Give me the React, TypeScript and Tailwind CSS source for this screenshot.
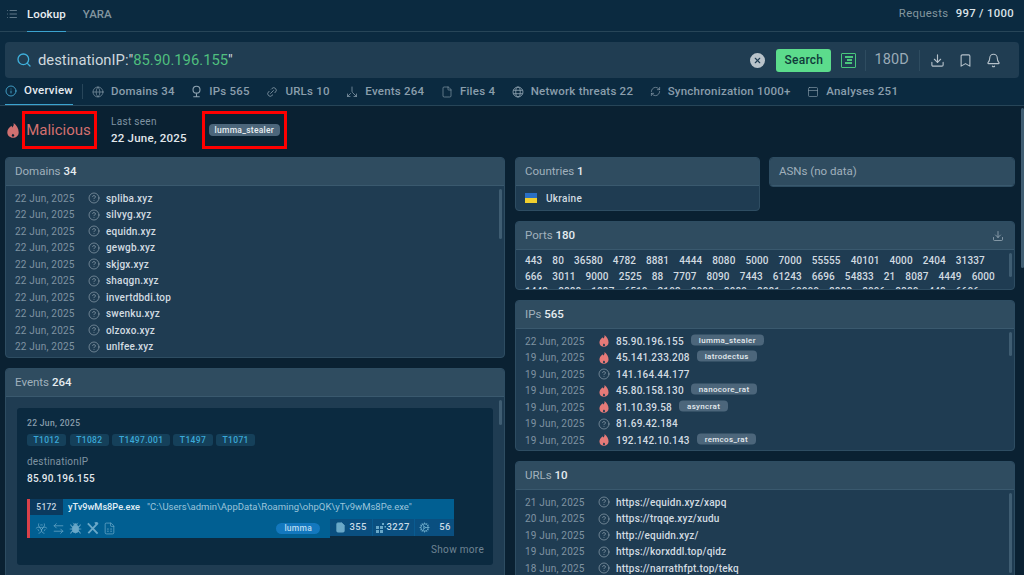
import React from "react";
import { List, Search, Info, Globe, Link2, File, RefreshCw, PanelTop, Download, Bookmark, Bell, CircleHelp, X, Split, Biohazard, ArrowLeftRight, Bug, FileSpreadsheet, Cog } from "lucide-react";

const Flame = ({ c = "w-[11px] h-[14px]" }: { c?: string }) => (
  <svg viewBox="0 0 12 15" className={c} fill="#e67a78">
    <path fillRule="evenodd" d="M6.600 0c.5 2.200-.4 3.400-1.300 4.400-.4-.5-.6-1-.6-1.700C2.200 4.300.3 6.500.3 9.300c0 3.200 2.500 5.500 5.700 5.500s5.700-2.300 5.700-5.400C11.700 5.500 9.500 2 6.600 0zM6 13.800c-.8 0-1.300-.5-1.300-1.200 0-.7.6-1.200 1.200-1.900.8.6 1.400 1.200 1.400 1.900 0 .7-.5 1.200-1.300 1.200z" />
  </svg>
);

const IpIcon = () => (
  <svg viewBox="0 0 12 14" className="h-[13px] w-[11px]" fill="none" stroke="#8fa3b1" strokeWidth="1.200">
    <circle cx="6" cy="5" r="3.800" />
    <path d="M6 8.800V12.500M2.500 12.800h7" />
  </svg>
);

const NetIcon = () => (
  <svg viewBox="0 0 14 14" className="h-[12px] w-[12px]" fill="none" stroke="#8fa3b1" strokeWidth="1">
    <circle cx="7" cy="7" r="5.800" />
    <ellipse cx="7" cy="7" rx="2.600" ry="5.800" />
    <path d="M1.500 5h11M1.500 9h11" />
  </svg>
);

const ToolsIcon = () => (
  <svg viewBox="0 0 14 14" className="h-[13px] w-[13px]" fill="none" stroke="#6aa8c8" strokeWidth="2">
    <path d="M2 1.500l10.500 11M12.500 1.500L2.500 12M9.500 1.500c1-.6 2.500-.4 3.300.5" />
  </svg>
);

const Card = ({ title, count, right, children, className = "" }: { title: string; count?: string; right?: React.ReactNode; children?: React.ReactNode; className?: string }) => (
  <section className={`relative flex flex-col overflow-hidden rounded-[4px] border border-[#2e4d62] bg-[#1f3c52] ${className}`}>
    <header className="flex h-[28px] shrink-0 items-center justify-between border-b border-[#3a596e] bg-[#2f4c60] pl-[9px] pr-[10px] text-[11.500px] text-[#a0b0bc]">
      <span>
        {title}
        {count && <span className="font-medium text-[#e6ecf0]"> {count}</span>}
      </span>
      {right}
    </header>
    {children}
  </section>
);

const Thumb = ({ top, h, right = "right-[2px]" }: { top: string; h: string; right?: string }) => (
  <span className={`absolute ${right} ${top} ${h} w-[3px] rounded-full bg-[#3f5d72]`} />
);

const Row = ({ date, mal, text, tag }: { date: string; mal?: boolean; text: string; tag?: string }) => (
  <div className="flex h-[16.500px] items-center pl-[9px]">
    <span className="w-[73px] shrink-0 text-[10px] tracking-[0.02em] text-[#7f93a2]">{date}</span>
    <span className="flex w-[18px] shrink-0 justify-start">
      {mal ? <Flame c="ml-[1px] w-[10px] h-[12px]" /> : <CircleHelp className="h-[12px] w-[12px] text-[#9fb0bc]" strokeWidth={1.200} />}
    </span>
    <span className="text-[10px] font-medium tracking-[0.02em] text-[#d2dbe1]">{text}</span>
    {tag && <span className="ml-[7px] -translate-y-[1.500px] rounded-[4px] bg-[#4c667b] px-[8px] text-[8px] leading-[11px] font-medium tracking-[0.04em] text-[#e4eaee]">{tag}</span>}
  </div>
);

const ports = [
  ["443", "80", "36580", "4782", "8881", "4444", "8080", "5000", "7000", "55555", "40101", "4000", "2404", "31337"],
  ["666", "3011", "9000", "2525", "88", "7707", "8090", "7443", "61243", "6696", "54833", "21", "8087", "4449", "6000"],
  ["1443", "8888", "1887", "6510", "2103", "8008", "8989", "8081", "60000", "8883", "8096", "8880", "448", "6606"],
];

const domains = ["spliba.xyz", "silvyg.xyz", "equidn.xyz", "gewgb.xyz", "skjgx.xyz", "shaqgn.xyz", "invertdbdi.top", "swenku.xyz", "olzoxo.xyz", "unlfee.xyz"];
const ips: [string, boolean, string, string?][] = [
  ["22 Jun, 2025", true, "85.90.196.155", "lumma_stealer"],
  ["19 Jun, 2025", true, "45.141.233.208", "latrodectus"],
  ["19 Jun, 2025", false, "141.164.44.177"],
  ["19 Jun, 2025", true, "45.80.158.130", "nanocore_rat"],
  ["19 Jun, 2025", true, "81.10.39.58", "asyncrat"],
  ["19 Jun, 2025", false, "81.69.42.184"],
  ["19 Jun, 2025", true, "192.142.10.143", "remcos_rat"],
];
const urls = [
  ["21 Jun, 2025", "https://equidn.xyz/xapq"],
  ["20 Jun, 2025", "https://trqqe.xyz/xudu"],
  ["19 Jun, 2025", "http://equidn.xyz/"],
  ["19 Jun, 2025", "https://korxddl.top/qidz"],
  ["18 Jun, 2025", "https://narrathfpt.top/tekq"],
];
const tabs: [React.ReactNode, string][] = [
  [<Globe className="h-[12px] w-[12px]" strokeWidth={1.300} />, "Domains 34"],
  [<IpIcon />, "IPs 565"],
  [<Link2 className="h-[12px] w-[12px] -rotate-45" strokeWidth={1.500} />, "URLs 10"],
  [<Split className="h-[12px] w-[12px] rotate-180" strokeWidth={1.500} />, "Events 264"],
  [<File className="h-[12px] w-[12px]" strokeWidth={1.300} />, "Files 4"],
  [<NetIcon />, "Network threats 22"],
  [<RefreshCw className="h-[11px] w-[11px]" strokeWidth={1.500} />, "Synchronization 1000+"],
  [<PanelTop className="h-[12px] w-[12px]" strokeWidth={1.300} />, "Analyses 251"],
];

export default function App() {
  return (
    <div className="relative h-[575px] w-[1024px] overflow-hidden bg-[#0a2132] font-['Roboto',sans-serif]">
      <div className="flex h-[32px] items-stretch border-b border-[#274558] bg-[#0b2a40] pl-[6px] pr-[10px]">
        <List className="mt-[8px] h-[12px] w-[12px] text-[#8ea2b0]" strokeWidth={1.300} />
        <div className="ml-[9px] flex h-[32px] items-center border-b border-[#3ba3cf] pb-[2px] text-[11.500px] font-medium tracking-[0.01em] text-[#e8eef2]">Lookup</div>
        <div className="ml-[17px] flex items-center pb-[2px] text-[11.500px] font-medium text-[#82959f]">YARA</div>
        <div className="ml-auto mt-[6px] text-[11.300px] tracking-[0.03em] text-[#83969f]">
          Requests <span className="ml-[4px] font-medium text-[#dbe3e8]">997 / 1000</span>
        </div>
      </div>
      <div className="bg-[#0b2a40] px-[5px] pt-[10px]">
        <div className="flex h-[36px] items-center rounded-[4px] bg-[#203d52] pl-[11px]">
          <Search className="h-[16px] w-[16px] text-[#3fb0dc]" strokeWidth={2} />
          <span className="ml-[6px] text-[14.800px] text-[#cfd8de]">
            destinationIP:"<span className="text-[#4fbf7e]">85.90.196.155</span>"
          </span>
          <span className="ml-auto flex h-[15px] w-[15px] items-center justify-center rounded-full bg-[#b9c3ca]">
            <X className="h-[9px] w-[9px] text-[#203d52]" strokeWidth={3} />
          </span>
          <button className="ml-[11px] flex h-[23px] w-[55px] items-center justify-center rounded-[3px] bg-[#5cdc8c] text-[12px] font-medium tracking-[0.02em] text-[#0f3b3a]">Search</button>
          <span className="ml-[10px] flex h-[15px] w-[15px] flex-col items-center justify-center gap-[1.500px] rounded-[1px] border-[1.500px] border-[#49c77c]">
            <i className="h-[1.500px] w-[8px] bg-[#49c77c]" />
            <i className="ml-[2px] h-[1.500px] w-[5px] bg-[#49c77c]" />
            <i className="h-[1.500px] w-[7px] bg-[#49c77c]" />
          </span>
          <i className="ml-[9px] h-[21px] w-px bg-[#2e4c60]" />
          <span className="ml-[8px] text-[14.500px] tracking-[0.01em] text-[#9aabb7]">180D</span>
          <i className="ml-[10px] h-[21px] w-px bg-[#2e4c60]" />
          <Download className="ml-[10px] h-[15px] w-[15px] text-[#b5c1ca]" strokeWidth={1.800} />
          <Bookmark className="ml-[13px] h-[15px] w-[15px] text-[#b5c1ca]" strokeWidth={1.800} />
          <Bell className="ml-[13px] h-[15px] w-[15px] text-[#b5c1ca]" strokeWidth={1.800} />
          <span className="w-[18px]" />
        </div>
        <nav className="flex h-[27px] items-stretch text-[11.500px] font-medium tracking-[0.02em] text-[#8a9eac]">
          <div className="flex items-center gap-[7px] border-b border-[#3ba3cf] text-[#e6ecf0]">
            <Info className="h-[12px] w-[12px] text-[#4cb5e0]" strokeWidth={1.600} />
            Overview
          </div>
          <i className="mx-[9px] my-[6px] w-px bg-[#28465a]" />
          <div className="flex items-stretch gap-[16.500px]">
            {tabs.map(([icon, label]) => (
              <div key={label} className="flex items-center gap-[7px]">
                {icon}
                {label}
              </div>
            ))}
          </div>
        </nav>
      </div>
      <div className="h-px bg-[#274558]" />

      <div className="flex h-[51px] items-center pb-[3px] pl-[7px]">
        <Flame c="w-[12px] h-[15px] opacity-90" />
        <div className="ml-[3px] flex h-[38px] w-[75px] items-center justify-center border-[3px] border-[#f00] pr-[2px] text-[15px] text-[#d4706f]">Malicious</div>
        <div className="ml-[14px] flex flex-col gap-[1px] pt-[2px]">
          <span className="text-[10px] tracking-[0.03em] text-[#7f93a2]">Last seen</span>
          <span className="text-[11.500px] font-medium tracking-[0.02em] text-[#e2e8ec]">22 June, 2025</span>
        </div>
        <div className="ml-[15px] flex h-[38px] w-[85px] items-center justify-center border-[3px] border-[#f00]">
          <span className="rounded-[4px] bg-[#4c667b] px-[6px] text-[8.500px] leading-[12px] font-medium tracking-[0.03em] text-[#e8edf0]">lumma_stealer</span>
        </div>
      </div>

      <main className="flex gap-[10px] px-[5px]">
        <div className="flex w-[500px] shrink-0 flex-col gap-[10px]">
          <Card title="Domains" count="34" className="h-[201px]">
            <div className="pt-[4px]">
              {domains.map((d) => (
                <Row key={d} date="22 Jun, 2025" text={d} />
              ))}
            </div>
            <Thumb top="top-[31px]" h="h-[50px]" />
          </Card>
          <Card title="Events" count="264" className="h-[260px]">
            <div className="mx-[11px] mt-[11px] flex h-[157px] shrink-0 flex-col rounded-[3px] bg-[#0b2a40] pl-[10px] pr-[10px] pt-[9px]">
              <div className="text-[8.500px] leading-[12px] font-medium tracking-[0.04em] text-[#8a9eac]">22 Jun, 2025</div>
              <div className="mt-[5px] flex gap-[3.500px]">
                {["T1012", "T1082", "T1497.001", "T1497", "T1071"].map((t) => (
                  <span key={t} className="rounded-[3px] bg-[#15405a] px-[6.500px] text-[8.500px] leading-[12px] font-medium tracking-[0.04em] text-[#3aa9d8]">{t}</span>
                ))}
              </div>
              <div className="mt-[9px] text-[10px] leading-[14px] tracking-[0.02em] text-[#7f93a2]">destinationIP</div>
              <div className="mt-[3px] text-[10px] leading-[14px] font-medium tracking-[0.02em] text-[#e2e8ec]">85.90.196.155</div>
              <div className="mt-[13px] flex h-[39px] w-[427px] flex-col border-l-[3px] border-[#d9414a]">
                <div className="flex h-[20px] items-start bg-[#015f92]">
                  <span className="flex h-[16px] w-[33px] items-center justify-center bg-[#0b3a5e] text-[8.500px] font-medium tracking-[0.03em] text-[#c8d6e0]">5172</span>
                  <span className="ml-[5px] text-[9.200px] leading-[16px] font-medium text-[#e2eef5]">yTv9wMs8Pe.exe</span>
                  <span className="ml-[7px] text-[9.500px] leading-[16px] text-[#9cc4da]">"C:\Users\admin\AppData\Roaming\ohpQK\yTv9wMs8Pe.exe"</span>
                </div>
                <div className="flex h-[19px] items-stretch">
                  <div className="flex w-[300px] shrink-0 items-center gap-[4px] bg-[#015f92] pl-[5px] text-[#6aa8c8]">
                    <Biohazard className="h-[13px] w-[13px]" strokeWidth={1.400} />
                    <ArrowLeftRight className="h-[13px] w-[13px]" strokeWidth={1.400} />
                    <Bug className="h-[13px] w-[13px] fill-[#6aa8c8]" strokeWidth={1.400} />
                    <ToolsIcon />
                    <FileSpreadsheet className="h-[13px] w-[13px]" strokeWidth={1.400} />
                    <span className="ml-auto mr-[10px] rounded-full bg-[#1378be] px-[8px] text-[8.500px] leading-[11px] font-medium tracking-[0.03em] text-[#b9dcf0]">lumma</span>
                  </div>
                  <div className="flex h-[17px] flex-1 items-center bg-[#0a4f80] text-[9.500px] font-medium tracking-[0.05em] text-[#c8dbe6]">
                    <div className="flex h-full w-[42px] items-center justify-between pl-[5px] pr-[5px]"><File className="h-[11px] w-[11px] fill-[#6aa8c8] text-[#6aa8c8]" />355</div>
                    <div className="flex h-full w-[42px] items-center justify-between border-l border-[#0a5b90] pl-[3px] pr-[4px]">
                      <svg viewBox="0 0 10 10" className="h-[10px] w-[10px]" fill="#6aa8c8"><path d="M0 3h3v3H0zM0 7h3v3H0zM4 7h3v3H4zM4 3h3v3H4zM6 0h2v2H6zM8.500 3h1.500v1.500H8.500z" /></svg>
                      3227
                    </div>
                    <div className="flex h-full flex-1 items-center justify-between border-l border-[#0a5b90] pl-[4px] pr-[3px]"><Cog className="h-[11px] w-[11px] text-[#6aa8c8]" />56</div>
                  </div>
                </div>
              </div>
              <div className="mt-[4px] w-[457px] text-right text-[10px] tracking-[0.03em] text-[#6f8493]">Show more</div>
            </div>
            <Thumb top="top-[31px]" h="h-[25px]" />
          </Card>
        </div>

        <div className="flex w-[500px] shrink-0 flex-col gap-[10px]">
          <div className="flex items-start gap-[9px]">
            <Card title="Countries" count="1" className="h-[54px] w-[245px]">
              <div className="flex flex-1 items-center pl-[9px] text-[10px] font-medium tracking-[0.03em] text-[#d2dbe1]">
                <span className="flex h-[10px] w-[12px] flex-col"><i className="flex-1 bg-[#2a6fc4]" /><i className="flex-1 bg-[#f0cf2e]" /></span>
                <span className="ml-[9px]">Ukraine</span>
              </div>
            </Card>
            <Card title="ASNs (no data)" className="h-[30px] w-[246px]" />
          </div>
          <Card title="Ports" count="180" className="h-[69px]" right={<Download className="h-[12px] w-[12px] text-[#a0b0bc]" strokeWidth={1.500} />}>
            <div className="pl-[9px] pt-[3px]">
              {ports.map((r, i) => (
                <div key={i} className="flex h-[15.500px] items-center gap-[10px] text-[10px] font-medium tracking-[0.01em] text-[#d2dbe1]">
                  {r.map((p) => <span key={p}>{p}</span>)}
                </div>
              ))}
            </div>
            <Thumb top="top-[31px]" h="h-[24px]" right="right-[2px]" />
          </Card>
          <Card title="IPs" count="565" className="h-[151px]">
            <div className="pt-[4px]">
              {ips.map(([d, m, t, tag]) => (
                <Row key={t} date={d} mal={m} text={t} tag={tag} />
              ))}
            </div>
            <Thumb top="top-[31px]" h="h-[24px]" right="right-[2px]" />
          </Card>
          <Card title="URLs" count="10" className="h-[125px]">
            <div className="pt-[4px]">
              {urls.map(([d, u]) => (
                <Row key={u} date={d} text={u} />
              ))}
            </div>
            <Thumb top="top-[31px]" h="h-[80px]" right="right-[2px]" />
          </Card>
        </div>
      </main>
      <span className="absolute right-[0px] top-[108px] h-[160px] w-[3px] rounded-full bg-[#3f5d72]" />
    </div>
  );
}
